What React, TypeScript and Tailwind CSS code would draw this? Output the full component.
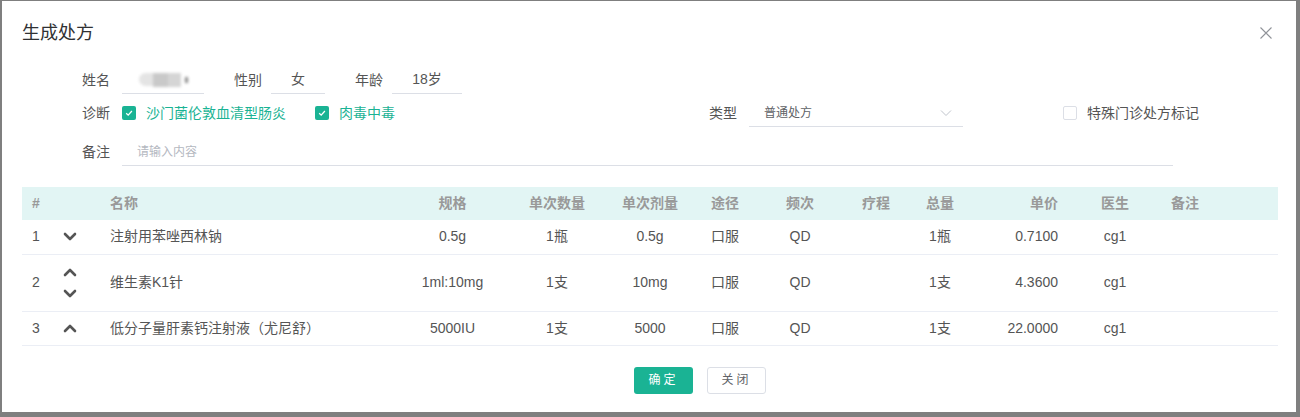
import React from 'react';

type Drug = {
  id: number;
  name: string;
  spec: string;
  qty: string;
  dose: string;
  route: string;
  freq: string;
  course: string;
  total: string;
  price: string;
  doctor: string;
  note: string;
  up: boolean;
  down: boolean;
};

const drugs: Drug[] = [
  { id: 1, name: '注射用苯唑西林钠', spec: '0.5g', qty: '1瓶', dose: '0.5g', route: '口服', freq: 'QD', course: '', total: '1瓶', price: '0.7100', doctor: 'cg1', note: '', up: false, down: true },
  { id: 2, name: '维生素K1针', spec: '1ml:10mg', qty: '1支', dose: '10mg', route: '口服', freq: 'QD', course: '', total: '1支', price: '4.3600', doctor: 'cg1', note: '', up: true, down: true },
  { id: 3, name: '低分子量肝素钙注射液（尤尼舒）', spec: '5000IU', qty: '1支', dose: '5000', route: '口服', freq: 'QD', course: '', total: '1支', price: '22.0000', doctor: 'cg1', note: '', up: true, down: false },
];

const font = { fontFamily: '"Liberation Sans", "Noto Sans CJK SC", Arial, sans-serif' };

function Chevron({ dir }: { dir: 'up' | 'down' }) {
  return (
    <svg width="14" height="9" viewBox="0 0 14 9" className="block">
      <path
        d={dir === 'down' ? 'M2 2 L7 7 L12 2' : 'M2 7 L7 2 L12 7'}
        fill="none"
        stroke="#555"
        strokeWidth="2.6"
        strokeLinecap="round"
        strokeLinejoin="round"
      />
    </svg>
  );
}

function CheckedBox() {
  return (
    <span className="w-[14px] h-[14px] rounded-[2px] bg-[#1ab394] flex items-center justify-center shrink-0">
      <svg width="10" height="10" viewBox="0 0 10 10">
        <path d="M2.2 5.2 L4.2 7.1 L7.9 3" fill="none" stroke="#fff" strokeWidth="1.3" />
      </svg>
    </span>
  );
}

export default function App() {
  return (
    <div className="w-[1300px] h-[417px] bg-[#7f7f7f] pt-[1px] pl-[2px] overflow-hidden text-[#555]" style={font}>
      <div className="w-[1294px] h-[411px] bg-white flex flex-col">
        {/* Header */}
        <div className="h-[64px] flex items-center justify-between pl-[20px] pr-[20px]">
          <h2 className="text-[18px] text-[#303133]">生成处方</h2>
          <svg width="14" height="14" viewBox="0 0 14 14" className="mr-[3px]">
            <path d="M1.5 1.5 L12.5 12.5 M12.5 1.5 L1.5 12.5" stroke="#909399" strokeWidth="1.1" />
          </svg>
        </div>

        {/* Form */}
        <div className="pl-[80px] text-[14px]">
          <div className="h-[30px] flex items-center">
            <span className="w-[40px]">姓名</span>
            <div className="w-[82px] h-[28px] border-b border-[#dcdfe6] flex items-center justify-center">
              <div className="flex items-center blur-[1.5px]">
                <span className="w-[14px] h-[13px] bg-[#e4e4e4] rounded-l-full" />
                <span className="w-[15px] h-[14px] bg-[#c9c9c9]" />
                <span className="w-[13px] h-[14px] bg-[#d5d5d5]" />
                <span className="w-[3px] h-[6px] bg-[#888] ml-[4px]" />
              </div>
            </div>
            <span className="w-[37px] ml-[30px]">性别</span>
            <div className="w-[54px] h-[28px] border-b border-[#dcdfe6] flex items-center justify-center">女</div>
            <span className="w-[37px] ml-[30px]">年龄</span>
            <div className="w-[70px] h-[28px] border-b border-[#dcdfe6] flex items-center justify-center">18岁</div>
          </div>

          <div className="h-[30px] flex items-center mt-[3px]">
            <span className="w-[40px]">诊断</span>
            <CheckedBox />
            <span className="ml-[10px] text-[#1ab394]">沙门菌伦敦血清型肠炎</span>
            <span className="ml-[29px]"><CheckedBox /></span>
            <span className="ml-[10px] text-[#1ab394]">肉毒中毒</span>
            <span className="ml-[314px] w-[40px]">类型</span>
            <div className="w-[214px] h-[28px] border-b border-[#dcdfe6] flex items-center justify-between pl-[15px] pr-[11px] text-[12px] text-[#606266]">
              <span>普通处方</span>
              <svg width="12" height="8" viewBox="0 0 12 8">
                <path d="M1 1.5 L6 6.5 L11 1.5" fill="none" stroke="#c0c4cc" strokeWidth="1" />
              </svg>
            </div>
            <span className="ml-[100px] w-[14px] h-[14px] border border-[#dcdfe6] rounded-[2px]" />
            <span className="ml-[10px]">特殊门诊处方标记</span>
          </div>

          <div className="h-[30px] flex items-center mt-[9px]">
            <span className="w-[40px]">备注</span>
            <div className="w-[1051px] h-[28px] border-b border-[#dcdfe6] flex items-center pl-[15px] text-[12px] text-[#b4b8bf]">
              请输入内容
            </div>
          </div>
        </div>

        {/* Table */}
        <div className="mt-[20px] px-[20px]">
          <table className="w-[1256px] table-fixed border-collapse text-[14px]">
            <colgroup>
              <col className="w-[40px]" />
              <col className="w-[38px]" />
              <col className="w-[300px]" />
              <col className="w-[105px]" />
              <col className="w-[104px]" />
              <col className="w-[82px]" />
              <col className="w-[68px]" />
              <col className="w-[82px]" />
              <col className="w-[70px]" />
              <col className="w-[58px]" />
              <col className="w-[99px]" />
              <col className="w-[94px]" />
              <col className="w-[116px]" />
            </colgroup>
            <thead>
              <tr className="h-[33px] bg-[#e2f5f4] text-[#999] font-bold">
                <th className="text-left pl-[10px] font-bold">#</th>
                <th />
                <th className="text-left pl-[10px] font-bold">名称</th>
                <th className="text-center font-bold">规格</th>
                <th className="text-center font-bold">单次数量</th>
                <th className="text-center font-bold">单次剂量</th>
                <th className="text-center font-bold">途径</th>
                <th className="text-center font-bold">频次</th>
                <th className="text-center font-bold">疗程</th>
                <th className="text-center font-bold">总量</th>
                <th className="text-right pr-[10px] font-bold">单价</th>
                <th className="text-center font-bold">医生</th>
                <th className="text-left pl-[9px] font-bold">备注</th>
              </tr>
            </thead>
            <tbody>
              {drugs.map(d => (
                <tr
                  key={d.id}
                  className={`border-b border-[#ebeef5] ${d.up && d.down ? 'h-[57px]' : 'h-[34px]'}`}
                >
                  <td className="pl-[10px]">{d.id}</td>
                  <td className="pl-[1px]">
                    <div className="flex flex-col gap-[12px]">
                      {d.up && <Chevron dir="up" />}
                      {d.down && <Chevron dir="down" />}
                    </div>
                  </td>
                  <td className="pl-[10px] whitespace-nowrap">{d.name}</td>
                  <td className="text-center">{d.spec}</td>
                  <td className="text-center">{d.qty}</td>
                  <td className="text-center">{d.dose}</td>
                  <td className="text-center">{d.route}</td>
                  <td className="text-center">{d.freq}</td>
                  <td className="text-center">{d.course}</td>
                  <td className="text-center">{d.total}</td>
                  <td className="text-right pr-[10px]">{d.price}</td>
                  <td className="text-center">{d.doctor}</td>
                  <td className="pl-[9px]">{d.note}</td>
                </tr>
              ))}
            </tbody>
          </table>
        </div>

        {/* Footer */}
        <div className="mt-[21px] flex gap-[14px] pl-[632px] text-[12px]">
          <button className="w-[59px] h-[27px] rounded-[3px] bg-[#1ab394] text-white tracking-[3px]">确定</button>
          <button className="w-[59px] h-[27px] rounded-[3px] border border-[#dcdfe6] bg-white text-[#606266] tracking-[3px]">关闭</button>
        </div>
      </div>
    </div>
  );
}
